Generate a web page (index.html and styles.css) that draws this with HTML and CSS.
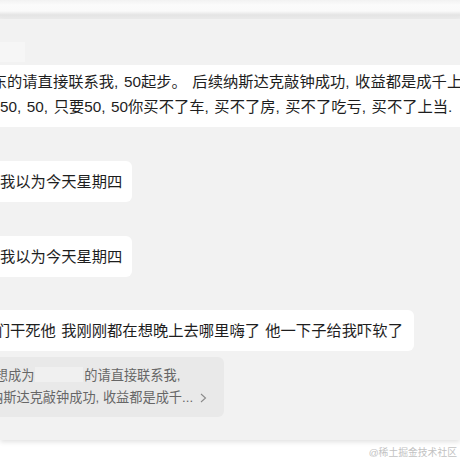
FILE: index.html
```html
<!DOCTYPE html>
<html lang="zh-CN">
<head>
<meta charset="utf-8">
<link rel="stylesheet" href="styles.css">
</head>
<body>
<div class="page">
  <div class="topbar"></div>
  <div class="panel">
    <div class="name-blur"></div>
    <div class="bubble wide">
      <div class="line cut-a">股东的请直接联系我, 50起步。 后续纳斯达克敲钟成功, 收益都是成千上万</div>
      <div class="line">50, 50, 只要50, 50你买不了车, 买不了房, 买不了吃亏, 买不了上当.</div>
    </div>
    <div class="bubble gap">
      <div class="line">我以为今天星期四</div>
    </div>
    <div class="bubble gap">
      <div class="line">我以为今天星期四</div>
    </div>
    <div class="bubble gap-s">
      <div class="line cut-b">你们干死他 我刚刚都在想晚上去哪里嗨了 他一下子给我吓软了</div>
    </div>
    <div class="quote">
      <div class="qline cut-c">如想成为<span class="blur"></span>的请直接联系我,</div>
      <div class="qline cut-d">纳斯达克敲钟成功, 收益都是成千...<svg class="chev" width="7" height="10" viewBox="0 0 7 10"><path d="M1 1 L5.5 5 L1 9" fill="none" stroke="#8a8a8a" stroke-width="1.1"/></svg></div>
    </div>
  </div>
  <div class="footer"><span class="wm">@稀土掘金技术社区</span></div>
</div>
</body>
</html>
```
FILE: styles.css
```css
html, body {
  margin: 0;
  padding: 0;
  background: #ffffff;
}
.page {
  width: 460px;
  height: 460px;
  overflow: hidden;
  display: flex;
  flex-direction: column;
  font-family: "Liberation Sans", "Noto Sans CJK SC", sans-serif;
}
.topbar {
  height: 19px;
  flex: none;
  background: linear-gradient(#f2f2f2 0px, #fbfbfb 5px, #fafafa 11px, #e4e4e4 15px, #ebebeb 18px, #f1f1f1 19px);
}
.panel {
  height: 421px;
  flex: none;
  background: #f2f2f2;
  overflow: hidden;
  display: flex;
  flex-direction: column;
  align-items: flex-start;
  box-shadow: 0 2px 5px rgba(0, 0, 0, 0.12);
  position: relative;
  z-index: 1;
}
.name-blur {
  margin-top: 23px;
  width: 25px;
  height: 20px;
  background: #f6f6f6;
}
.bubble {
  background: #ffffff;
  border-radius: 6px;
  margin-left: -12px;
  padding: 8px 10px 8px 12px;
  font-size: 15.3px;
  line-height: 25px;
  color: #1e1e1e;
  white-space: nowrap;
  word-spacing: 1px;
}
.bubble.wide {
  margin-top: 3px;
  padding-top: 4px;
  padding-bottom: 8px;
  border-radius: 0;
  padding-right: 60px;
  word-spacing: 1.3px;
}
.bubble.gap {
  margin-top: 34px;
}
.bubble.gap-s {
  margin-top: 33px;
  padding-right: 11px;
}
.line {
  white-space: nowrap;
}
.cut-a {
  margin-left: -23.6px;
}
.cut-b {
  margin-left: -20.6px;
}
.quote {
  margin-top: 6px;
  margin-left: -12px;
  background: #e9e9e9;
  border-radius: 6px;
  padding: 8px 17px 8px 12px;
  font-size: 13.2px;
  line-height: 22px;
  color: #666666;
  white-space: nowrap;
}
.qline {
  white-space: nowrap;
}
.cut-c {
  margin-left: -18.4px;
}
.cut-d {
  margin-left: -9.9px;
}
.blur {
  display: inline-block;
  width: 48px;
  height: 15px;
  background: #f0f0f0;
  vertical-align: -2px;
  margin: 0 1px;
}
.chev {
  margin-left: 7px;
  vertical-align: -1px;
}
.footer {
  flex: none;
  height: 20px;
  background: #ffffff;
  display: flex;
  justify-content: flex-end;
  align-items: center;
  padding-right: 3px;
}
.wm {
  font-size: 9.8px;
  color: #c2c2c2;
  padding-top: 3px;
}
```
